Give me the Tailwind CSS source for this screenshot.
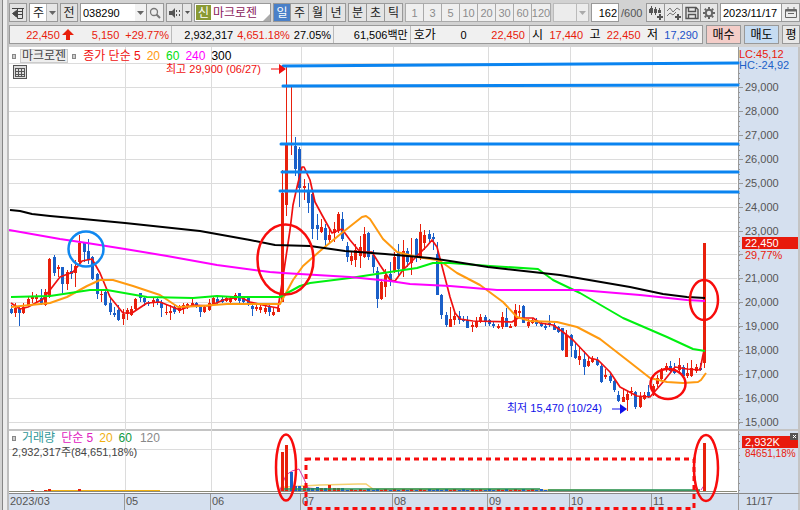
<!DOCTYPE html>
<html lang="ko">

<head>
    <meta charset="UTF-8">
    <meta name="viewport" content="width=device-width, initial-scale=1.0">
    <title>마크로젠 038290 - 종합차트</title>
    <script src="https://cdn.jsdelivr.net/npm/@tailwindcss/browser@4"></script>
</head>

<body class="flex h-screen overflow-hidden bg-[#d2d2d2] font-['Liberation_Sans','Noto_Sans_CJK_KR',sans-serif] text-[11px] leading-3 text-[#222]">
    <!-- window frame -->
    <div class="w-[9px] shrink-0 border-r-2 border-[#bdbdbd] flex">
        <div class="w-[3px] border-r border-[#858585]"></div>
        <div class="flex-1 bg-[#ececec]"></div>
    </div>

    <div class="flex min-w-0 flex-1 flex-col">
        <!-- toolbar -->
        <header class="flex h-[25px] shrink-0 items-start gap-[2px] pt-[3px] text-xs leading-3">
            <button aria-label="창 설정" class="flex h-[19px] w-[18px] shrink-0 items-center justify-center border border-[#999] bg-[#e2e2e2]">
                <svg class="h-3 w-3" viewBox="0 0 12 12" fill="none" stroke="#444">
                    <path d="M0 1.500H12M10.500 1V11.500H5.500V1M6 4.500H10M6 7.500H10" />
                    <path d="M4.500 3.500V10L0.500 6.500Z" fill="#444" />
                </svg>
            </button>
            <div class="relative h-[19px] w-[29px] shrink-0">
                <select aria-label="종류" class="h-full w-full appearance-none border border-[#999] bg-white pl-[3px] text-[#222]">
                    <option>주</option>
                </select>
                <span class="pointer-events-none absolute inset-y-px right-px flex w-[11px] items-center justify-center border-l border-[#bbb] bg-[#e6e6e6]">
                    <svg class="h-1 w-[7px]" viewBox="0 0 7 4"><path d="M0 0H7L3.500 4Z" fill="#666" /></svg>
                </span>
            </div>
            <button class="h-[19px] w-[18px] shrink-0 border border-[#999] bg-[#e2e2e2]">전</button>
            <div class="flex h-[19px] w-[84px] shrink-0 border border-[#999] bg-white">
                <input aria-label="종목코드" value="038290" class="w-[54px] pl-[2px] text-[11px] text-black outline-none">
                <button aria-label="종목코드 목록" class="flex w-[11px] items-center justify-center bg-[#f2f2f2]">
                    <svg class="h-1 w-[7px]" viewBox="0 0 7 4"><path d="M0 0H7L3.500 4Z" fill="#666" /></svg>
                </button>
                <button aria-label="검색" class="flex flex-1 items-center justify-center border-l border-[#999] bg-[#ececec]">
                    <svg class="h-3 w-3" viewBox="0 0 12 12" fill="none" stroke="#777">
                        <circle cx="5" cy="5" r="3.500" stroke-width="1.300" />
                        <path d="M7.500 7.500L11 11" stroke-width="2" />
                    </svg>
                </button>
            </div>
            <div class="flex h-[19px] w-[26px] shrink-0 border border-[#999] bg-[#e6e6e6]">
                <button aria-label="음성" class="flex flex-1 items-center justify-center">
                    <svg class="h-3 w-3" viewBox="0 0 12 12" fill="#555">
                        <path d="M0 4H3L6 1V11L3 8H0Z" />
                        <path d="M7 3H8V5H7ZM7 7H8V9H7ZM10 3H11V5H10ZM10 7H11V9H10Z" />
                    </svg>
                </button>
                <button aria-label="음성 목록" class="flex w-[9px] items-center justify-center border-l border-[#999]">
                    <svg class="h-[3px] w-[5px]" viewBox="0 0 7 4"><path d="M0 0H7L3.500 4Z" fill="#555" /></svg>
                </button>
            </div>
            <div class="relative flex h-[19px] w-[77px] shrink-0 items-center border border-[#999] bg-white">
                <span class="ml-px flex h-[15px] w-[15px] shrink-0 items-center justify-center bg-[#8a9a35] text-white">신</span>
                <input aria-label="종목명" value="마크로젠" class="ml-[2px] w-[54px] text-xs text-[#8b1a5c] outline-none">
                <svg class="absolute right-0 bottom-0 h-[7px] w-[7px]" viewBox="0 0 7 7"><path d="M7 0V7H0Z" fill="#aaa" /></svg>
            </div>
            <div class="flex h-[19px] shrink-0 divide-x divide-[#999] border border-[#999] bg-[#e4e4e4]">
                <button class="w-[17px] bg-[#4a80c8] text-white">일</button>
                <button class="w-[18px]">주</button>
                <button class="w-[18px]">월</button>
                <button class="w-[18px]">년</button>
            </div>
            <div class="flex h-[19px] shrink-0 divide-x divide-[#999] border border-[#999] bg-[#e4e4e4]">
                <button class="w-[18px]">분</button>
                <button class="w-[18px]">초</button>
                <button class="w-[17px]">틱</button>
            </div>
            <div class="flex h-[19px] shrink-0 divide-x divide-[#aaa] border border-[#aaa] bg-[#efefef] text-[11px] text-[#8c8c8c]">
                <button class="w-[18px]">1</button>
                <button class="w-[18px]">3</button>
                <button class="w-[18px]">5</button>
                <button class="w-[18px]">10</button>
                <button class="w-[18px]">20</button>
                <button class="w-[18px]">30</button>
                <button class="w-[18px]">60</button>
                <button class="flex w-[18px] items-center justify-center overflow-hidden">120</button>
            </div>
            <div class="relative h-[19px] w-[36px] shrink-0">
                <select aria-label="분 간격" disabled class="h-full w-full appearance-none border border-[#bbb] bg-[#ececec]">
                    <option></option>
                </select>
                <span class="pointer-events-none absolute inset-y-px right-px flex w-3 items-center justify-center border-l border-[#bbb]">
                    <svg class="h-1 w-[7px]" viewBox="0 0 7 4"><path d="M0 0H7L3.500 4Z" fill="#aaa" /></svg>
                </span>
            </div>
            <input id="barCount" value="162" class="h-[19px] w-[28px] shrink-0 border border-[#999] bg-white pr-px text-right text-[11px] text-black">
            <label for="barCount" class="pt-1 text-[11px] text-[#555]">/600</label>
            <div class="ml-auto flex h-[19px] shrink-0 divide-x divide-[#999] border border-[#999] bg-[#e8e8e8]">
                <button aria-label="봉 추가" class="flex w-[18px] items-center justify-center">
                    <svg class="h-[14px] w-[14px]" viewBox="0 0 14 14" fill="#555">
                        <path d="M0 3H1V2H2V0H3V2H4V7H3V9H2V7H0ZM5 3H6V1H7V3H8V7H7V9H6V7H5ZM9 4H10V2H11V4H12V7H9Z" />
                        <path d="M10 8H12V10H14V12H12V14H10V12H8V10H10Z" />
                    </svg>
                </button>
                <button aria-label="지표 추가" class="flex w-[18px] items-center justify-center">
                    <svg class="h-[14px] w-[14px]" viewBox="0 0 14 14" fill="none" stroke="#777">
                        <path d="M0 5L3 2L6 6L10 2L13 4M0 10L3 7L6 9L9 6" />
                        <path d="M10 8H12V10H14V12H12V14H10V12H8V10H10Z" fill="#555" stroke="none" />
                    </svg>
                </button>
                <button aria-label="저장" class="flex w-[18px] items-center justify-center">
                    <svg class="h-[14px] w-[14px]" viewBox="0 0 14 14" fill="none" stroke="#555">
                        <path d="M1 1.500H11L13 3.500V12.500H1ZM3.500 1.500V5.500H10.500V1.500M3.500 12.500V8.500H10.500V12.500" stroke-width="1.400" />
                    </svg>
                </button>
                <button aria-label="설정" class="flex w-[16px] items-center justify-center">
                    <svg class="h-3 w-3" viewBox="0 0 12 12" fill="none" stroke="#666">
                        <circle cx="6" cy="6" r="3.200" stroke-width="2" />
                        <path d="M6 0V2M6 10V12M0 6H2M10 6H12M1.800 1.800L3.200 3.200M8.800 8.800L10.200 10.200M1.800 10.200L3.200 8.800M8.800 3.200L10.200 1.800" stroke-width="2" />
                    </svg>
                </button>
            </div>
            <div class="flex h-[19px] w-[80px] shrink-0 border border-[#999] bg-white">
                <input aria-label="기준일" value="2023/11/17" class="w-[60px] pl-[2px] text-[11px] text-black outline-none">
                <button aria-label="달력" class="flex flex-1 items-center justify-center border-l border-[#999] bg-[#ececec]">
                    <svg class="h-[11px] w-3" viewBox="0 0 12 11" fill="none" stroke="#666">
                        <path d="M0.500 2.500H11.500V10.500H0.500ZM3 0V3M9 0V3M3 6.500H9" />
                        <path d="M1 3.500H11" stroke-width="2" />
                    </svg>
                </button>
            </div>
        </header>

        <!-- quote line -->
        <section class="mb-[3px] flex h-[19px] shrink-0 gap-[3px]">
            <div class="grid flex-1 grid-cols-[163fr_163fr_77fr_120fr_173fr] divide-x divide-[#bbb] border border-[#999] bg-[#f0f0f0] text-black">
                <div class="flex items-center justify-end gap-[2px] pr-[2px] text-[#e8200c]">
                    <span>22,450</span>
                    <svg class="mr-4 h-[11px] w-3" viewBox="0 0 12 11" fill="#e8200c"><path d="M6 0L12 6H8V11H4V6H0Z" /></svg>
                    <span>5,150</span>
                    <span class="ml-1">+29.77%</span>
                </div>
                <div class="flex items-center justify-end gap-1 pr-[2px]">
                    <span>2,932,317</span>
                    <span class="text-[#e8200c]">4,651.18%</span>
                    <span>27.05%</span>
                </div>
                <div class="flex items-center justify-end pr-[2px]">61,506백만</div>
                <div class="flex items-center justify-between pr-1 pl-[3px]">
                    <span class="text-xs leading-3">호가</span>
                    <span>0</span>
                    <span class="text-[#e8200c]">22,450</span>
                </div>
                <div class="flex items-center justify-between pr-1 pl-[2px]">
                    <span class="text-xs leading-3">시</span>
                    <span class="text-[#e8200c]">17,440</span>
                    <span class="text-xs leading-3">고</span>
                    <span class="text-[#e8200c]">22,450</span>
                    <span class="text-xs leading-3">저</span>
                    <span class="text-[#2050c8]">17,290</span>
                </div>
            </div>
            <button class="w-[35px] border border-[#999] bg-[#f4cdc8] text-xs leading-3 text-black">매수</button>
            <button class="w-[35px] border border-[#999] bg-[#c6dcf2] text-xs leading-3 text-black">매도</button>
            <button class="w-[18px] border border-[#999] bg-[#e8e8e8] text-xs leading-3 text-black">평</button>
        </section>

        <!-- chart -->
        <main class="relative grid min-h-0 flex-1 grid-cols-[1fr_62px] grid-rows-[1fr_62px_17px]">
            <section class="border-b-2 border-[#c4c4c4] bg-white pt-[2px] pl-[3px]">
                <div class="relative z-10 flex items-center gap-1 text-xs leading-3">
                    <i class="h-[5px] w-1 border border-[#888] bg-[#ccc]"></i>
                    <button class="h-[14px] border border-[#ccc] bg-[#eee] px-px text-[#444]">마크로젠</button>
                    <i class="h-[5px] w-1 border border-[#888] bg-[#ccc]"></i>
                    <span class="ml-[3px] text-[#f01010]">종가 단순 5</span>
                    <span class="ml-[2px] text-[#ff9a10]">20</span>
                    <span class="ml-[2px] text-[#00e010]">60</span>
                    <span class="ml-[2px] text-[#ff00ff]">240</span>
                    <span class="ml-[2px] text-black">300</span>
                </div>
                <button aria-label="데이터 표" class="relative z-10 mt-[2px] ml-px block h-[14px] w-[14px] border border-[#555] bg-[#ddd]">
                    <svg class="h-3 w-3" viewBox="0 0 12 12" fill="none" stroke="#555" shape-rendering="crispEdges">
                        <path d="M1.500 2.500H10.500V10.500H1.500ZM1 5.500H11M1 8.500H11M4.500 2V11M7.500 2V11" />
                    </svg>
                </button>
            </section>
            <aside class="relative flex flex-col justify-between border-r-2 border-b-2 border-l border-r-[#c4c4c4] border-b-[#c4c4c4] border-l-[#999] bg-[#d5e0ef] pt-[34px] pb-px pl-[6px] text-[#555]">
                <div class="absolute top-[2px] left-0 leading-[11px]">
                    <p class="text-[#e8200c]">LC:45,12</p>
                    <p class="text-[#2060c8]">HC:-24,92</p>
                </div>
                <span>29,000</span>
                <span>28,000</span>
                <span>27,000</span>
                <span>26,000</span>
                <span>25,000</span>
                <span>24,000</span>
                <span>23,000</span>
                <span class="invisible">22,000</span>
                <span>21,000</span>
                <span>20,000</span>
                <span>19,000</span>
                <span>18,000</span>
                <span>17,000</span>
                <span>16,000</span>
                <span>15,000</span>
                <div class="absolute top-[190px] right-0 left-[3px]">
                    <p class="bg-[#e81a0c] pl-[3px] text-white">22,450</p>
                    <p class="pl-[3px] text-[#e8200c]">29,77%</p>
                </div>
            </aside>

            <section class="bg-white pt-px pl-[3px]">
                <div class="relative z-10 flex items-center gap-[6px] text-xs leading-3">
                    <i class="h-[5px] w-1 border border-[#888] bg-[#ccc]"></i>
                    <span class="text-[#309898]">거래량</span>
                    <span class="text-[#e020c0]">단순 5</span>
                    <span class="text-[#f0b010]">20</span>
                    <span class="text-[#109840]">60</span>
                    <span class="ml-[2px] text-[#888]">120</span>
                </div>
                <p class="relative z-10 mt-[2px] text-[#444]">2,932,317주(84,651,18%)</p>
            </section>
            <aside class="relative border-r-2 border-l border-r-[#c4c4c4] border-l-[#999] bg-[#d5e0ef] pt-[5px] pl-[3px]">
                <p class="bg-[#e81a0c] pl-[3px] text-white">2,932K</p>
                <p class="pl-[3px] text-[10px] leading-3 whitespace-nowrap text-[#e8200c]">84651,18%</p>
                <button aria-label="닫기" class="absolute top-[2px] right-0 flex h-[7px] w-[8px] items-center justify-center bg-[#555]">
                    <svg class="h-[5px] w-[5px]" viewBox="0 0 5 5" stroke="#fff"><path d="M1 1L4 4M4 1L1 4" /></svg>
                </button>
            </aside>

            <footer class="grid grid-cols-[116fr_86fr_90fr_92fr_95fr_82fr_82fr_86fr] divide-x divide-[#999] border-t border-[#888] bg-[#d5e0ef] text-[11px] leading-[15px] text-[#555]">
                <span class="pl-px">2023/03</span>
                <span class="pl-px">05</span>
                <span class="pl-px">06</span>
                <span class="pl-px">07</span>
                <span class="pl-px">08</span>
                <span class="pl-px">09</span>
                <span class="pl-px">10</span>
                <span class="pl-px">11</span>
            </footer>
            <div class="border-t border-r-2 border-l border-t-[#888] border-r-[#c4c4c4] border-l-[#999] bg-[#d5e0ef] pl-[7px] text-[11px] leading-[15px] text-[#555]">11/17</div>

            <svg class="pointer-events-none absolute inset-0 h-full w-full" viewBox="9 47 791 463" preserveAspectRatio="none" fill="none">
                <g id="grid" stroke="#dcdcdc" shape-rendering="crispEdges"></g>
                <g id="ticks" stroke="#999" shape-rendering="crispEdges"></g>

                <!-- volume averages -->
                <path d="M45 490.500H160" stroke="#f0b010" />
                <path d="M280 490L285 487L320 485L358 484L366 484L373 489L540 490L700 491" stroke="#f5d070" stroke-width="1.500" />
                <path d="M280 490.500H700" stroke="#999" />
                <path d="M280 490L286 475L292 471L299 469L304 479L308 488L320 489" stroke="#d030b0" />
                <path d="M701 490L705 484" stroke="#d030b0" />
                <g id="volume" shape-rendering="crispEdges"></g>
                <path d="M284 489H540M548 490H700" stroke="#209050" stroke-width="1.500" />
                <path d="M9 491.500H737" stroke="#8a8a7a" />

                <!-- price averages: 5, 20, 60, 240, 300 -->
                <g id="candles" shape-rendering="crispEdges"></g>
                <g stroke-width="2" stroke-linejoin="round">
                    <path stroke="#f01010" stroke-width="1.700" d="M11 303L20 309L28 307L43 299L60 277L73 272L82 261L92 259L100 273L110 297L123 313L132 313L147 303L160 302L180 310L193 305L210 306L223 300L240 297L250 302L267 306L278 308L283 277L290 230L293 205L297 187L302 167L304 167L310 180L315 202L322 215L332 233L342 229L350 240L360 252L372 252L380 265L390 280L395 281L403 270L417 256L427 246L432 240L437 247L443 270L450 297L455 313L460 319L473 321L512 322L518 318L533 318L540 323L553 325L563 332L573 340L590 358L598 360L610 372L620 387L637 396L650 397L663 382L675 367L687 369L700 370L703 355L705 347" />
                    <path stroke="#ff9a10" d="M11 307L50 303L67 297L87 286L100 280L113 280L133 286L160 295L178 307L200 306L227 304L280 304L293 280L303 266L320 251L343 232L362 217L366 216L370 219L383 239L397 252L417 257L437 260L443 263L457 273L480 285L503 302L517 317L530 321L557 322L577 327L600 339L627 360L650 378L667 382L683 383L698 382L701 380L706 373" />
                    <path stroke="#00f010" d="M11 297L50 296L70 293L90 290L107 290L147 297L193 298L217 296L233 297L280 297L300 286L310 283L350 278L383 273L417 268L433 263L450 263L490 266L538 269L553 280L580 293L623 318L667 337L693 349L705 351" />
                    <path stroke="#ff00ff" d="M9 230L60 239L87 243L125 249L167 256L217 265L270 272L283 273L350 277L390 281L410 284L450 286L497 290L580 290L640 295L687 300L705 301" />
                    <path stroke="#000" d="M10 210L20 211L32 214L50 216L83 219L125 223L200 231L250 240L275 245L310 246L345 251L385 254L430 258L450 261L488 267L560 275L630 287L663 294L687 297L705 298" />
                </g>

                <!-- drawn resistance lines -->
                <g stroke="#0a84f0" stroke-width="3" stroke-linecap="round">
                    <path d="M283 66L738 63" />
                    <path d="M283 86L738 85" />
                    <path d="M281 144H738" />
                    <path d="M282 172H738" />
                    <path d="M280 191L738 192" />
                </g>
                <circle cx="86" cy="249" r="17.500" stroke="#1088f0" stroke-width="2.500" />
                <g stroke="#f80c0c" stroke-width="2.500">
                    <ellipse cx="285.500" cy="259.500" rx="28" ry="35" />
                    <ellipse cx="668" cy="384" rx="17.500" ry="15" />
                    <ellipse cx="704" cy="300" rx="14" ry="20" />
                    <ellipse cx="286" cy="467.500" rx="10" ry="33" />
                    <ellipse cx="706" cy="468" rx="12" ry="33" />
                </g>
                <path d="M306 459H694V508.500H306Z" stroke="#f80c0c" stroke-width="3" stroke-dasharray="5 4" />

                <path d="M271 69H281" stroke="#f01010" />
                <path d="M279 64L286 69L279 74Z" fill="#f01010" />
                <path d="M612 409H622" stroke="#1010e8" />
                <path d="M620 404L627 409L620 414Z" fill="#1010e8" />
            </svg>

            <!-- high / low notes -->
            <p class="absolute top-[16px] left-[157px] whitespace-nowrap text-[#f01010]">최고 29,900 (06/27)</p>
            <p class="absolute top-[355px] left-[498px] whitespace-nowrap text-[#1010e8]">최저 15,470 (10/24)</p>
        </main>
    </div>

    <script>
        const UP = '#e8200c';
        const DOWN = '#1a5fc8';

        // direction, high, body top, body bottom, low
        const candles = `D 305 309 313 314,U 303 308 313 317,D 307 309 313 326,U 303 307 313 314,U 297 299 305 306,
U 292 296 299 303,U 294 297 299 303,D 289 298 303 305,U 289 292 305 306,U 258 259 297 298,
D 255 257 273 276,U 265 267 269 277,D 267 267 284 293,U 270 272 284 290,D 264 271 274 279,
U 260 266 273 287,U 235 243 262 265,D 242 243 252 262,D 239 251 260 264,D 256 257 279 280,
D 273 274 294 299,U 290 294 295 302,D 290 292 305 306,D 298 303 312 315,D 307 313 315 317,
D 305 310 320 321,U 309 314 319 325,U 308 310 314 320,U 306 309 315 316,U 298 299 309 310,
D 293 293 298 302,D 296 298 302 306,D 301 303 304 306,U 297 300 302 307,D 298 299 303 305,
D 300 302 308 317,U 305 312 313 315,U 305 311 313 320,D 305 307 312 314,U 305 307 311 313,
U 303 305 309 314,U 303 304 307 309,U 297 303 305 306,D 302 303 307 308,D 305 307 312 317,
U 305 307 312 313,U 299 303 310 311,U 297 298 305 306,D 296 299 303 304,D 297 299 302 303,
U 297 298 301 302,U 297 299 302 305,U 293 295 300 301,D 293 293 301 305,D 296 297 302 304,
D 296 298 305 306,D 305 306 309 316,U 304 307 309 311,U 305 307 310 313,U 305 308 312 314,
D 305 307 312 316,U 307 312 315 316,U 303 308 312 312,U 170 193 302 302,U 66 144 205 216,
U 86 143 145 155,D 137 146 169 176,D 147 149 188 207,U 179 186 188 200,D 183 191 203 213,
D 190 194 229 239,D 214 225 229 240,U 219 227 232 233,D 224 228 240 249,U 227 235 240 244,
U 222 229 233 242,U 212 214 231 233,D 212 219 239 241,D 242 246 257 262,U 252 256 261 265,
U 244 250 260 267,U 236 247 256 268,U 227 234 257 258,D 232 233 257 260,D 250 255 267 273,
D 267 271 299 308,U 279 282 299 300,U 269 275 287 297,D 262 274 281 286,U 252 257 272 273,
D 244 252 269 275,U 240 251 270 277,D 248 251 262 267,U 238 257 263 275,D 238 239 258 262,
U 224 232 257 260,U 230 235 243 250,D 230 234 239 243,D 233 237 239 250,D 242 254 295 295,
D 294 295 315 319,D 312 315 325 327,U 307 319 327 327,U 312 316 320 325,D 311 316 320 324,
D 316 319 321 322,D 316 320 328 328,U 322 325 327 332,U 317 321 327 328,U 314 317 322 323,
D 315 317 321 326,D 319 320 324 326,D 322 324 326 328,U 324 326 328 329,U 312 317 327 329,
D 308 318 327 327,U 324 326 328 328,U 304 310 326 327,U 305 311 313 317,D 305 306 323 323,
U 319 322 326 328,U 318 320 323 324,D 318 321 324 326,D 322 323 326 327,D 323 326 328 330,
D 315 323 325 327,D 323 325 330 330,D 326 327 332 333,D 328 328 350 351,U 330 335 357 357,
D 334 335 346 357,D 343 350 358 359,U 346 356 360 365,D 351 359 367 375,U 357 361 366 367,
U 356 359 362 363,D 357 360 365 366,D 363 366 382 383,U 369 375 377 379,D 374 376 381 383,
D 380 381 390 392,D 391 395 401 402,U 389 397 402 402,U 391 394 400 411,U 387 391 392 396,
D 391 392 407 409,U 392 396 407 408,U 392 395 399 400,D 385 392 397 398,U 384 386 392 396,
U 375 378 384 387,U 368 370 379 380,U 363 366 370 372,D 361 366 371 373,D 363 369 373 374,
U 358 365 370 372,D 365 367 376 377,U 363 373 376 378,U 360 368 376 377,U 364 367 371 373,
D 363 368 370 371,U 243 243 363 368`.split(',').map(row => row.trim().split(' '));

        // bar heights that stand out from the flat volume
        const volume = { 5: 1, 8: 1, 9: 2, 16: 2, 63: 39, 64: 46, 65: 19, 66: 5, 67: 5, 68: 5, 69: 3, 70: 3, 71: 4, 72: 3, 73: 3, 74: 6, 75: 3, 76: 3, 77: 3, 161: 48 };

        const add = (id, name, attrs) => {
            const el = document.createElementNS('http://www.w3.org/2000/svg', name);
            Object.entries(attrs).forEach(([key, value]) => el.setAttribute(key, value));
            document.getElementById(id).appendChild(el);
        };

        for (let i = 0; i < 16; i++) {
            const y = Math.round(63 + i * 23.93);
            add('grid', 'path', { d: `M9 ${y + 0.5}H737` });
            if (i > 0) add('ticks', 'path', { d: `M738 ${y + 0.5}H743` });
        }
        add('grid', 'path', { d: 'M9 449.5H737' });
        [125, 211, 301, 393, 488, 570, 652].forEach(x => add('grid', 'path', { d: `M${x + 0.5} 47V492` }));
        for (let y = 73; y < 428; y += 4.8) {
            add('ticks', 'path', { d: `M738 ${Math.round(y) + 0.5}H740` });
        }
        for (let y = 434; y < 492; y += 7) {
            add('ticks', 'path', { d: `M738 ${y + 0.5}H740` });
        }

        candles.forEach(([dir, high, top, bottom, low], i) => {
            const x = Math.round(10.5 + i * 4.31);
            const fill = dir === 'U' ? UP : DOWN;
            add('candles', 'rect', { x, y: high, width: 1, height: low - high, fill });
            add('candles', 'rect', { x: x - 1, y: top, width: 3, height: Math.max(bottom - top, 1), fill });

            const size = volume[i] || (i > 77 && i < 125 ? 1 + i % 2 : 0);
            if (size) {
                const color = i === 65 ? DOWN : fill;
                add('volume', 'rect', { x: x - 1, y: 491 - size, width: 3, height: size, fill: color });
            }
        });
    </script>
</body>

</html>
